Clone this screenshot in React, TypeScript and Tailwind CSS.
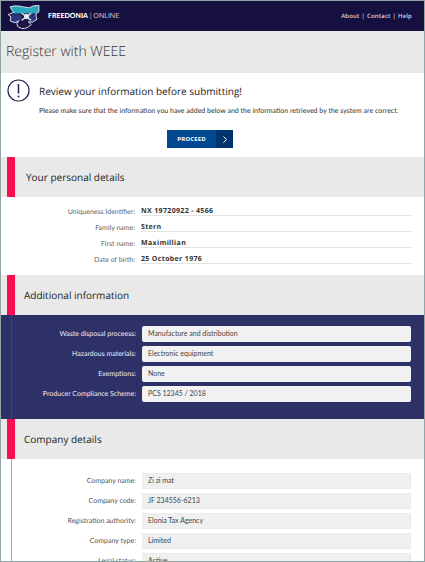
import React from 'react';

const personal = [
  ['Uniqueness Identifier:', 'NX 19720922 - 4566'],
  ['Family name:', 'Stern'],
  ['First name:', 'Maximillian'],
  ['Date of birth:', '25 October 1976'],
];

const additional = [
  ['Waste disposal proceess:', 'Manufacture and distribution'],
  ['Hazardous materials:', 'Electronic equipment'],
  ['Exemptions:', 'None'],
  ['Producer Compliance Scheme:', 'PCS 12345 / 2018'],
];

const company = [
  ['Company name:', 'Zi zi mat'],
  ['Company code:', 'JF 234556-6213'],
  ['Registration authority:', 'Elonia Tax Agency'],
  ['Company type:', 'Limited'],
  ['Legal status:', 'Active'],
];

const outline =
  'M5 5l4-1 4 0 6 1 6 1 4-2 6-.5V10l-3 2v3l1 3-5 3-4-.5 3 3-4 3-3 1h-3l-4-2-1-3 2-3-4 2-5-2 1-4-3-2.500 6-2.500-2-2z';

function Logo() {
  return (
    <svg viewBox="3 2 34 26" className="h-[25px] w-[33px] shrink-0" aria-hidden="true">
      <path d={outline} fill="#1c1747" />
      <path d="M5 5l4-1h4l6 1 6 1 4-2 6-.5V10l-3 2H7.500l1.500-1-2-2z" fill="#27a9bd" />
      <path d="M4.500 13H15l3 3-3 4-5 2-5-2 1-4zM25 13h7v2l1 3-5 3-4-1-2-4z" fill="#30367b" />
      <path d={outline} fill="none" stroke="#dfe4ec" strokeWidth="1" strokeLinejoin="round" />
      <path d="M17 11.500l10 7.500M27 11.500l-10 7.500" stroke="#cfd4df" strokeWidth="1.500" />
      <circle cx="22" cy="15" r="2.600" fill="#e9ebf0" />
    </svg>
  );
}

function SectionHeading({ title, inset }: { title: string; inset: string }) {
  return (
    <div className="flex h-10 items-center bg-[#e9e9e9] pl-[6px]">
      <div className="h-full w-2 bg-[#f90f50]" />
      <h2 className={`${inset} text-[10px] leading-4 text-[#222]`}>{title}</h2>
    </div>
  );
}

function Fields({ rows, dark, prefix }: { rows: string[][]; dark?: boolean; prefix: string }) {
  return (
    <div className="flex grow flex-col gap-1 pr-[13px]">
      {rows.map(([label, value], i) => (
        <div key={label} className="flex items-center gap-[6px]">
          <label
            htmlFor={`${prefix}-${i}`}
            className={`w-[124px] shrink-0 text-right font-['Lato','Open_Sans',sans-serif] text-[7px] leading-3 whitespace-nowrap ${dark ? 'text-[#eeeef5]' : 'text-[#555]'}`}
          >
            {label}
          </label>
          <input
            id={`${prefix}-${i}`}
            readOnly
            value={value}
            className={`h-4 w-full min-w-0 pb-[2px] font-['Lato','Open_Sans',sans-serif] text-[7px] text-[#444] outline-none ${dark ? 'rounded-xs bg-[#f2f2f2] px-[6px]' : 'border border-[#ececec] bg-[#f0f0f0] px-[5px]'}`}
          />
        </div>
      ))}
    </div>
  );
}

export default function App() {
  return (
    <div className="h-screen overflow-hidden border border-[#91a5a5] bg-white font-['Open_Sans','Noto_Sans',sans-serif] [text-rendering:geometricPrecision]">
      <header className="flex h-[30px] items-center bg-[#15103f] pr-3 pl-[7px] text-white">
        <Logo />
        <p className="ml-[7px] font-['Lato','Open_Sans',sans-serif] text-[7px] leading-3">
          <span className="font-black">FREEDONIA</span> <span className="text-[#c9c7d8]">| ONLINE</span>
        </p>
        <nav className="ml-auto flex gap-[2px] text-[6px] leading-3 font-semibold tracking-wide text-[#d9d8e3]">
          <a href="#about">About</a>
          <span>|</span>
          <a href="#contact">Contact</a>
          <span>|</span>
          <a href="#help">Help</a>
        </nav>
      </header>

      <div className="flex h-[42px] items-center bg-[#e9e9e9] pl-[5px]">
        <h1 className="text-[14px] leading-5 font-light text-[#333]">Register with WEEE</h1>
      </div>

      <main>
        <section className="flex h-[84px] pt-[6px] pl-[6px]">
          <svg viewBox="0 0 24 24" className="size-6 shrink-0" fill="none" aria-hidden="true">
            <circle cx="11.500" cy="11.500" r="10.500" stroke="#292353" strokeWidth="1.200" />
            <path d="M11.500 5v9.500" stroke="#292353" strokeWidth="1.500" />
            <circle cx="11.500" cy="17.500" r="1" fill="#292353" />
          </svg>
          <div className="ml-2 grow pt-1">
            <h2 className="text-[10px] leading-4 text-[#222]">Review your information before submitting!</h2>
            <p className="mt-1 font-['Lato','Open_Sans',sans-serif] text-[7px] leading-4 text-[#333]">
              Please make sure that the information you have added below and the information retrieved by the system are correct.
            </p>
            <button className="mt-[11px] ml-32 flex h-[18px] w-[66px] items-center bg-[#004990] text-[6px] font-bold tracking-wide text-white">
              <span className="grow">PROCEED</span>
              <span className="flex h-full w-[17px] items-center justify-center bg-[#00346d]">
                <svg viewBox="0 0 4 7" className="h-[7px] w-1" fill="none" aria-hidden="true">
                  <path d="M.5.500 3.500 3.500.5 6.500" stroke="white" />
                </svg>
              </span>
            </button>
          </div>
        </section>

        <section>
          <SectionHeading title="Your personal details" inset="ml-[11px]" />
          <dl className="flex h-[78px] flex-col pt-[3px] pr-[13px]">
            {personal.map(([label, value]) => (
              <div key={label} className="flex h-4 items-end gap-[6px]">
                <dt className="w-[134px] shrink-0 text-right font-['Lato','Open_Sans',sans-serif] text-[7px] leading-[7px] text-[#666]">{label}</dt>
                <dd className="grow border-b border-[#e3e3e3] text-[7px] leading-[7px] font-bold tracking-wider text-[#333]">{value}</dd>
              </div>
            ))}
          </dl>
        </section>

        <section>
          <SectionHeading title="Additional information" inset="ml-[9px]" />
          <div className="flex h-[104px] bg-[#2e3068] pt-[11px] pl-[10px]">
            <div className="-mt-[11px] h-[104px] w-px shrink-0 bg-[#7a2a5c]" />
            <Fields rows={additional} dark prefix="additional" />
          </div>
        </section>

        <section>
          <SectionHeading title="Company details" inset="ml-[9px]" />
          <div className="flex pl-[10px]">
            <div className="w-px shrink-0 bg-[#f8809f]" />
            <div className="flex grow pt-[14px]">
              <Fields rows={company} prefix="company" />
            </div>
          </div>
        </section>
      </main>
    </div>
  );
}
